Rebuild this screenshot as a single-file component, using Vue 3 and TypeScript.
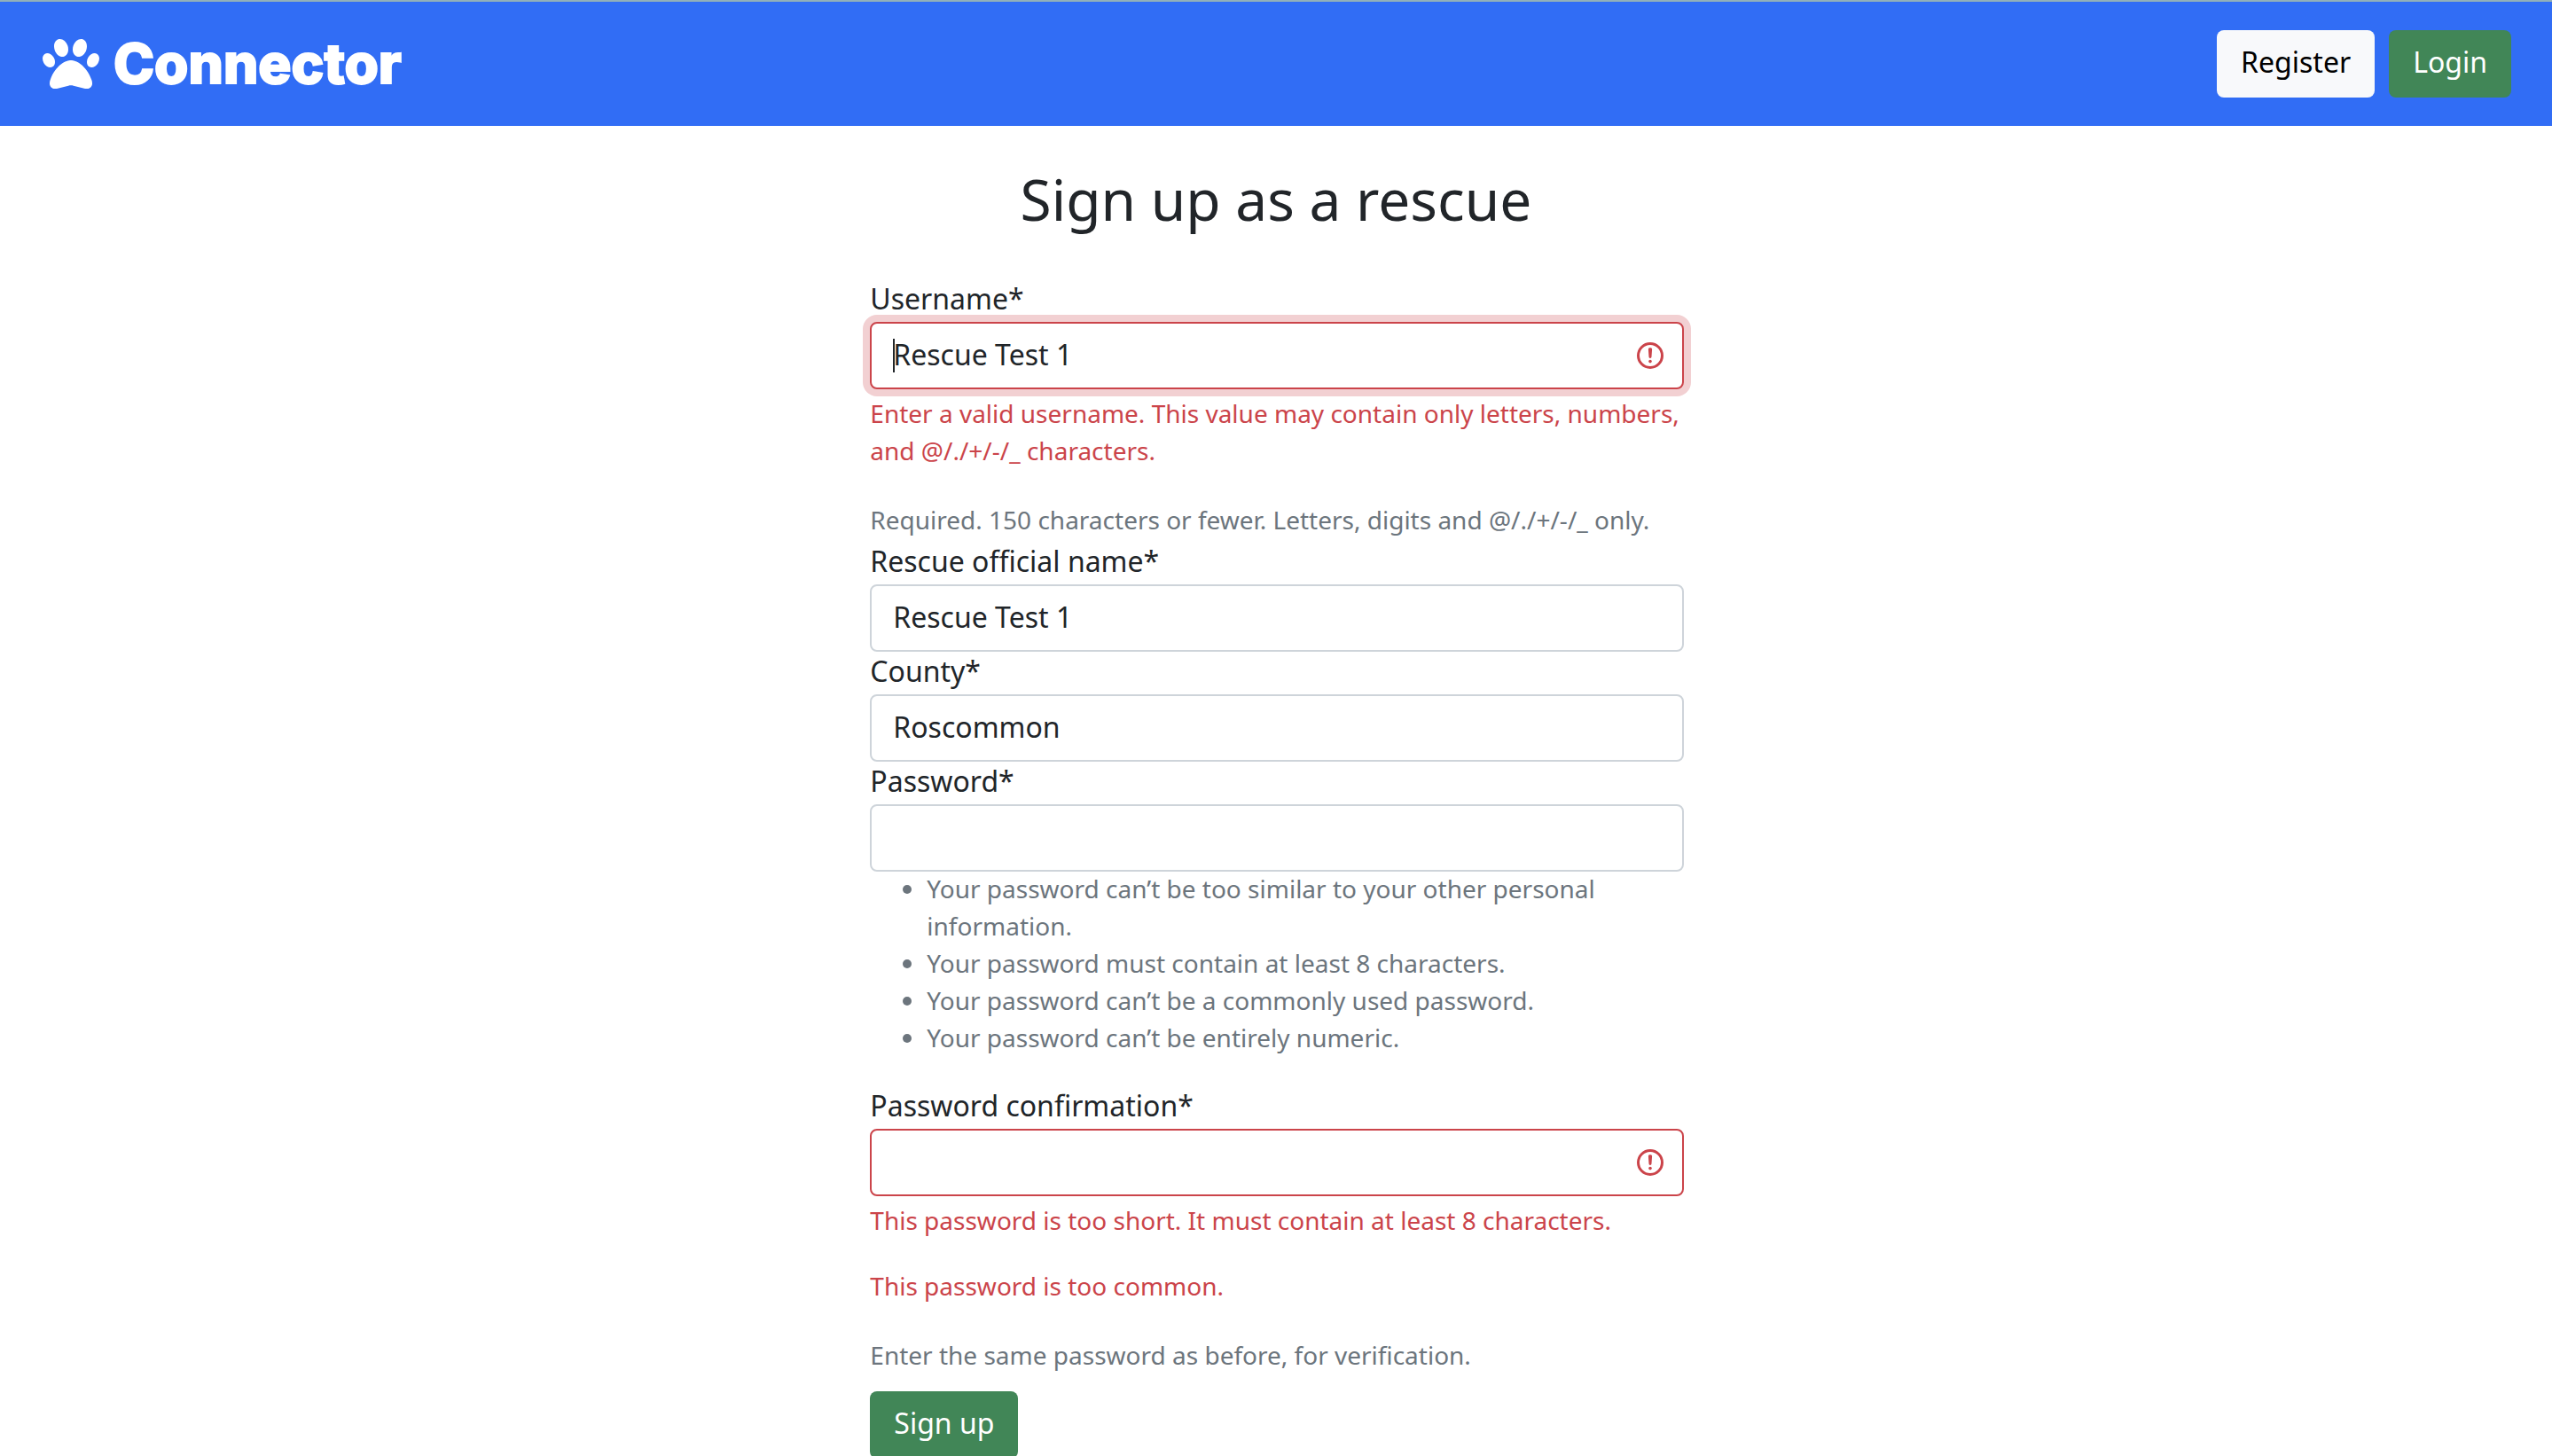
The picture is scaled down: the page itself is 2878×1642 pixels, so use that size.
<script setup lang="ts">
import { ref } from 'vue'

interface Field {
  id: string
  label: string
  type: 'text' | 'password'
  value: string
  invalid?: boolean
  active?: boolean
  errors?: string[]
  help?: string
  rules?: string[]
}

const fields = ref<Field[]>([
  {
    id: 'username',
    label: 'Username*',
    type: 'text',
    value: 'Rescue Test 1',
    invalid: true,
    active: true,
    errors: ['Enter a valid username. This value may contain only letters, numbers, and @/./+/-/_ characters.'],
    help: 'Required. 150 characters or fewer. Letters, digits and @/./+/-/_ only.',
  },
  { id: 'rescue_name', label: 'Rescue official name*', type: 'text', value: 'Rescue Test 1' },
  { id: 'county', label: 'County*', type: 'text', value: 'Roscommon' },
  {
    id: 'password1',
    label: 'Password*',
    type: 'password',
    value: '',
    rules: [
      'Your password can’t be too similar to your other personal information.',
      'Your password must contain at least 8 characters.',
      'Your password can’t be a commonly used password.',
      'Your password can’t be entirely numeric.',
    ],
  },
  {
    id: 'password2',
    label: 'Password confirmation*',
    type: 'password',
    value: '',
    invalid: true,
    errors: [
      'This password is too short. It must contain at least 8 characters.',
      'This password is too common.',
    ],
    help: 'Enter the same password as before, for verification.',
  },
])
</script>

<template>
  <div class="page">
    <header class="navbar">
      <a class="brand" href="#">
        <svg class="paw" viewBox="0 0 512 512" aria-hidden="true">
          <path d="M226.5 92.9c14.3 42.9-.3 86.2-32.6 96.8s-70.1-15.6-84.4-58.5s.3-86.2 32.6-96.8s70.1 15.6 84.4 58.5zM100.4 198.6c18.9 32.4 14.3 70.1-10.2 84.1s-59.7-.9-78.5-33.3S-2.7 179.3 21.8 165.3s59.7 .9 78.5 33.3zM69.2 401.2C121.6 259.9 214.7 224 256 224s134.4 35.9 186.8 177.2c3.6 9.7 5.2 20.1 5.2 30.5v1.6c0 25.8-20.9 46.7-46.7 46.7c-11.5 0-22.9-1.4-34-4.2l-88-22c-15.3-3.8-31.3-3.8-46.6 0l-88 22c-11.1 2.8-22.5 4.2-34 4.2C84.9 480 64 459.1 64 433.3v-1.6c0-10.4 1.6-20.8 5.2-30.5zM421.8 282.7c-24.5-14-29.1-51.7-10.2-84.1s54-47.3 78.5-33.3s29.1 51.7 10.2 84.1s-54 47.3-78.5 33.3zM310.1 189.7c-32.3-10.6-46.9-53.9-32.6-96.8s52.1-69.1 84.4-58.5s46.9 53.9 32.6 96.8s-52.1 69.1-84.4 58.5z" />
        </svg>
        <span class="brand-name">Connector</span>
      </a>
      <nav class="actions">
        <a class="btn btn-light" href="#">Register</a>
        <a class="btn btn-success" href="#">Login</a>
      </nav>
    </header>

    <main class="main">
      <h1 class="title">Sign up as a rescue</h1>
      <form class="form" @submit.prevent>
        <div v-for="field in fields" :key="field.id" class="field">
          <label class="label" :for="field.id">{{ field.label }}</label>
          <div class="control">
            <input
              :id="field.id"
              v-model="field.value"
              class="input"
              :class="{ invalid: field.invalid, active: field.active }"
              :type="field.type"
            />
            <span v-if="field.active" class="caret"></span>
            <svg v-if="field.invalid" class="alert" viewBox="0 0 12 12" aria-hidden="true">
              <circle cx="6" cy="6" r="4.5" />
              <path d="M5.8 3.6h.4L6 6.5z" stroke-linejoin="round" />
              <circle class="dot" cx="6" cy="8.2" r=".6" />
            </svg>
          </div>
          <div v-if="field.errors" class="errors">
            <p v-for="error in field.errors" :key="error" class="error">{{ error }}</p>
          </div>
          <p v-if="field.help" class="help">{{ field.help }}</p>
          <ul v-if="field.rules" class="rules">
            <li v-for="rule in field.rules" :key="rule">{{ rule }}</li>
          </ul>
        </div>
        <button class="btn btn-success submit" type="submit">Sign up</button>
      </form>
    </main>
  </div>
</template>

<style>
body {
  margin: 0;
  background: #fff;
}
</style>

<style scoped>
.page {
  color: #212529;
  font-family: "Noto Sans", "Open Sans", sans-serif;
  font-size: 32px;
}

.page * {
  box-sizing: border-box;
}

.navbar {
  display: flex;
  align-items: center;
  justify-content: space-between;
  padding: 32px 46px 32px 48px;
  border-top: 2px solid #92b0b9;
  background: #316df5;
}

.brand {
  display: flex;
  align-items: center;
  gap: 16px;
  color: #fff;
  text-decoration: none;
}

.paw {
  width: 64px;
  height: 64px;
  fill: #fff;
}

.brand-name {
  font-family: Inter, sans-serif;
  font-size: 62px;
  font-weight: 800;
  line-height: 76px;
  -webkit-text-stroke: 2px #fff;
}

.actions {
  display: flex;
  gap: 16px;
}

.btn {
  display: inline-block;
  padding: 10px 27px 14px;
  border: 0;
  border-radius: 8px;
  font-family: inherit;
  font-size: 32px;
  line-height: 52px;
  text-decoration: none;
}

.btn-light {
  background: #f8f9fb;
  color: #000;
}

.btn-success {
  background: #418657;
  color: #fff;
}

.main {
  display: flex;
  flex-direction: column;
  align-items: center;
  padding: 45px 24px 0;
}

.title {
  margin: 0 0 52px;
  font-size: 64px;
  font-weight: 400;
  line-height: 76px;
}

.form {
  width: 33.3333%;
  padding: 0 12px 0 14px;
}

.label {
  display: block;
  padding-bottom: 4px;
  line-height: 44px;
}

.control {
  position: relative;
}

.input {
  display: block;
  width: 100%;
  height: 76px;
  padding: 8px 24px 12px;
  border: 2px solid #ced4da;
  border-radius: 8px;
  outline: 0;
  background: #fff;
  color: #212529;
  font-family: inherit;
  font-size: 32px;
}

.input.invalid {
  padding-right: 72px;
  border-color: #cb444a;
}

.input.active {
  box-shadow: 0 0 0 8px #f2d0d2;
}

.caret {
  position: absolute;
  top: 19px;
  left: 26px;
  width: 2px;
  height: 38px;
  background: #212529;
}

.alert {
  position: absolute;
  top: 20px;
  right: 20px;
  width: 36px;
  height: 36px;
  fill: none;
  stroke: #cb444a;
}

.alert .dot {
  fill: #cb444a;
  stroke: none;
}

.errors,
.help,
.rules {
  font-size: 28px;
  line-height: 42px;
}

.errors {
  display: flex;
  flex-direction: column;
  gap: 32px;
  margin-top: 6px;
  color: #cb444a;
}

.error {
  margin: 0;
}

.help {
  margin: 36px 0 4px;
  color: #6c757d;
}

.rules {
  margin: -2px 0 34px;
  padding-left: 64px;
  color: #6c757d;
}

.submit {
  margin-top: 16px;
}
</style>
